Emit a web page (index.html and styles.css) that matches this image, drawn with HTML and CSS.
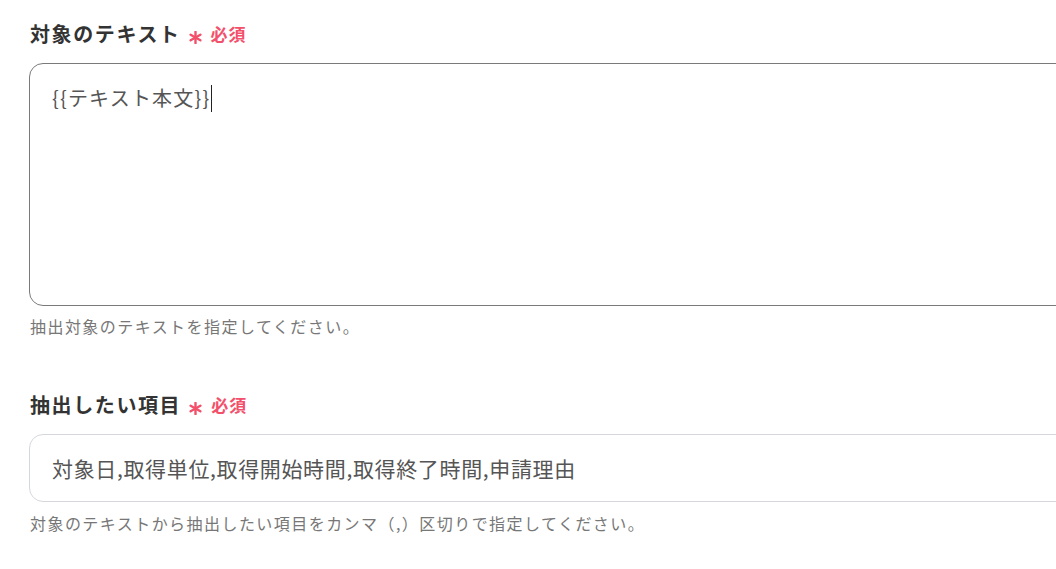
FILE: index.html
```html
<!DOCTYPE html>
<html lang="ja">
<head>
<meta charset="utf-8">
<link rel="stylesheet" href="styles.css">
</head>
<body>
<div class="form">
  <div class="field">
    <div class="label">
      <span class="label-text">対象のテキスト</span>
      <svg class="star" viewBox="0 0 12 12" width="13" height="13"><g stroke="#f2506b" stroke-width="2.2" stroke-linecap="round"><line x1="6" y1="0.8" x2="6" y2="11.2"/><line x1="1.5" y1="3.4" x2="10.5" y2="8.6"/><line x1="1.5" y1="8.6" x2="10.5" y2="3.4"/></g></svg>
      <span class="req">必須</span>
    </div>
    <div class="textarea"><span class="value">{{テキスト本文}}</span><span class="caret"></span></div>
    <div class="help">抽出対象のテキストを指定してください。</div>
  </div>
  <div class="field second">
    <div class="label">
      <span class="label-text">抽出したい項目</span>
      <svg class="star" viewBox="0 0 12 12" width="13" height="13"><g stroke="#f2506b" stroke-width="2.2" stroke-linecap="round"><line x1="6" y1="0.8" x2="6" y2="11.2"/><line x1="1.5" y1="3.4" x2="10.5" y2="8.6"/><line x1="1.5" y1="8.6" x2="10.5" y2="3.4"/></g></svg>
      <span class="req">必須</span>
    </div>
    <div class="input"><span class="value-lg">対象日,取得単位,取得開始時間,取得終了時間,申請理由</span></div>
    <div class="help">対象のテキストから抽出したい項目をカンマ（,）区切りで指定してください。</div>
  </div>
</div>
</body>
</html>
```
FILE: styles.css
```css
html, body {
  margin: 0;
  padding: 0;
  background: #ffffff;
  overflow: hidden;
}
body {
  font-family: "Noto Sans CJK JP", "Noto Sans", sans-serif;
  color: #333333;
}
.form {
  padding: 20px 0 0 29px;
  width: 1100px;
}
.field.second {
  margin-top: 54px;
}
.label {
  display: flex;
  align-items: center;
  height: 28px;
  padding-left: 1px;
}
.label-text {
  font-size: 20px;
  font-weight: 700;
  letter-spacing: 1.6px;
  color: #333333;
  line-height: 28px;
}
.star {
  margin-left: 8px;
  margin-top: 7px;
  display: block;
}
.req {
  margin-left: 9px;
  font-size: 17px;
  font-weight: 700;
  letter-spacing: 1px;
  color: #f2506b;
  line-height: 28px;
}
.textarea {
  margin-top: 15px;
  box-sizing: border-box;
  height: 243px;
  border: 1px solid #7a7a7a;
  border-radius: 14px;
  padding: 19px 22px 0;
  display: flex;
  align-items: flex-start;
}
.value {
  font-size: 20px;
  line-height: 30px;
  letter-spacing: 1.2px;
  color: #555555;
}
.caret {
  display: block;
  width: 1px;
  height: 27px;
  margin-top: 2px;
  margin-left: 1px;
  background: #222222;
}
.input {
  margin-top: 15px;
  box-sizing: border-box;
  height: 68px;
  border: 1px solid #d6d7dc;
  border-radius: 14px;
  padding: 0 22px;
  display: flex;
  align-items: center;
}
.value-lg {
  font-size: 21px;
  line-height: 30px;
  letter-spacing: 0.65px;
  color: #555555;
}
.help {
  margin-top: 9px;
  font-size: 16px;
  line-height: 22px;
  letter-spacing: 1.45px;
  color: #777777;
  padding-left: 1px;
}
.second .help {
  margin-top: 10px;
}
```
